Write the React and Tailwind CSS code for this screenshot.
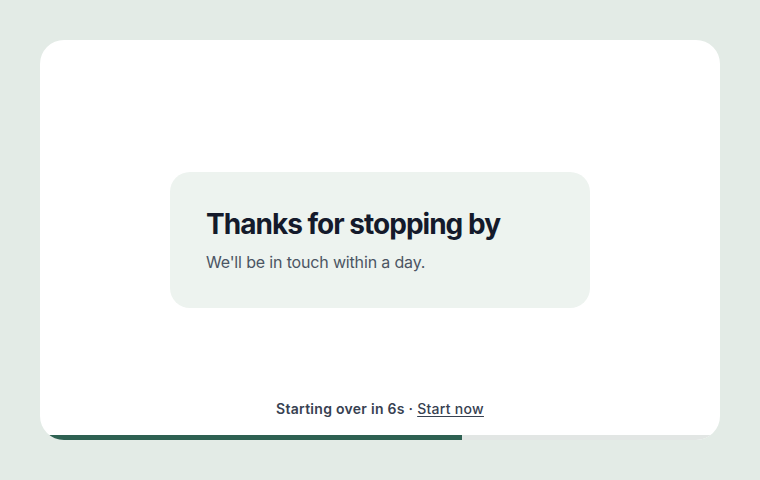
import { useState } from 'react'

export default function App() {
    const [left] = useState(6)
    const progress = 62

    return (
        <div className="w-[760px] h-[480px] bg-[#e3ebe6] p-10 font-['Inter',sans-serif]">
            <div className="h-full bg-white rounded-[24px] overflow-hidden flex flex-col">
                <div className="h-[50px]" />

                {/* Confirmation panel */}
                <div className="flex-1 flex items-center justify-center">
                    <div className="w-[420px] h-[136px] bg-[#edf3ef] rounded-[20px] px-9 flex flex-col justify-center">
                        <h1 className="text-[28px] leading-9 font-bold tracking-[-0.035em] text-[#141a2b]">
                            Thanks for stopping by
                        </h1>
                        <p className="mt-2 text-[16px] leading-6 tracking-[-0.01em] text-[#4b5563]">
                            We'll be in touch within a day.
                        </p>
                    </div>
                </div>

                {/* Restart countdown */}
                <div className="h-[45px] pt-[9px] text-center text-[14px] leading-5 font-semibold tracking-[0.02em] text-[#374151]">
                    Starting over in {left}s ·{' '}
                    <button className="underline underline-offset-2 font-medium tracking-[0.02em]">Start now</button>
                </div>
                <div className="h-[5px] bg-[#e2e6e4]">
                    <div className="h-full bg-[#2e6152]" style={{ width: `${progress}%` }} />
                </div>
            </div>
        </div>
    )
}
